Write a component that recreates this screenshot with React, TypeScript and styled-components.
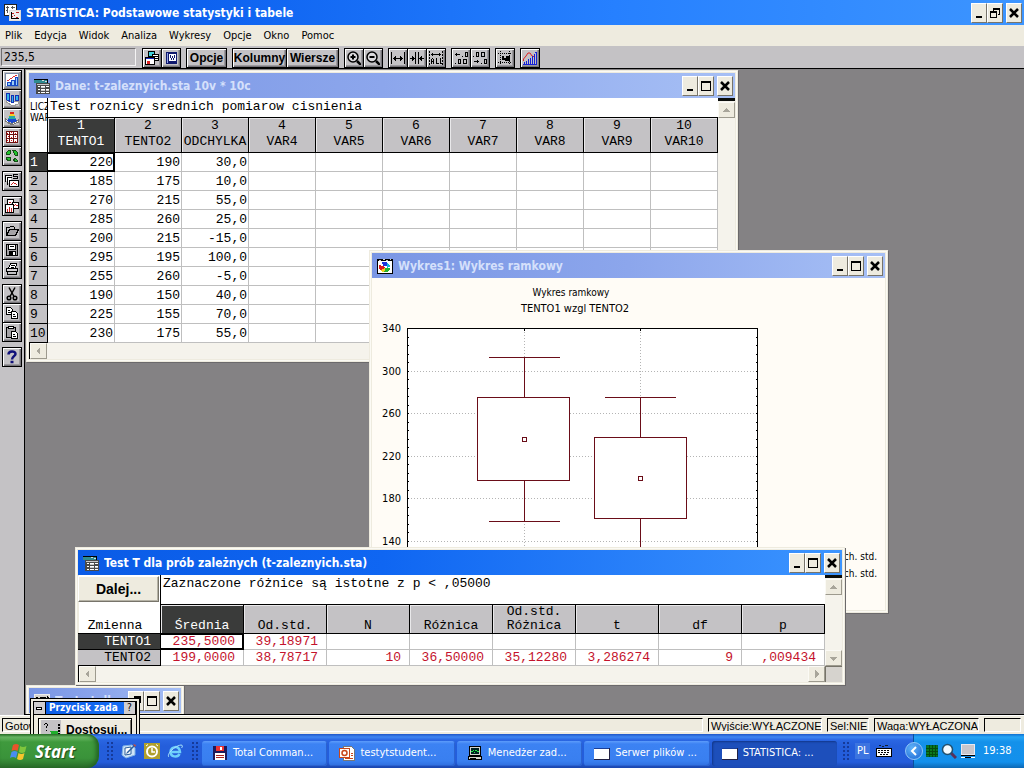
import React from 'react';
import styled, { createGlobalStyle, css } from 'styled-components';

const ui = '"DejaVu Sans Condensed", "DejaVu Sans", sans-serif';
const system = '"Liberation Sans", Arial, sans-serif';
const mono = '"Liberation Mono", "Courier New", monospace';
const gray = '#c4c2c5';
const cream = '#eeebdf';

const Global = createGlobalStyle`
  * { box-sizing: border-box; }
  html, body, #root { height: 100%; margin: 0; }
  body { overflow: hidden; }
  button, input { font: inherit; color: inherit; margin: 0; padding: 0; border-radius: 0; }
  svg { display: block; flex: none; }
`;

/* ---------- shell ---------- */

const Desktop = styled.div`
  position: relative;
  display: flex;
  flex-direction: column;
  height: 100vh;
  background: ${cream};
  font: 11px/14px ${ui};
  color: #000;
`;

const AppTitle = styled.header`
  display: flex;
  align-items: center;
  height: 25px;
  padding: 0 2px 0 4px;
  background: linear-gradient(90deg, #0a5be6 0%, #0d62f0 20%, #2680ff 60%, #3d95ff 100%);
`;

const TitleText = styled.h1<{ $dim?: boolean }>`
  flex: 1;
  min-width: 0;
  margin: 0 0 0 5px;
  overflow: hidden;
  white-space: nowrap;
  font: bold 12px/16px ${ui};
  color: ${(p) => (p.$dim ? '#d5e0fb' : '#fff')};
`;

const Menu = styled.nav`
  display: flex;
  align-items: center;
  gap: 12px;
  height: 21px;
  padding: 0 5px;
`;

const MenuItem = styled.button`
  border: 0;
  background: none;
`;

const Toolbar = styled.div`
  display: flex;
  align-items: center;
  gap: 6px;
  height: 23px;
  padding: 0 2px 0 1px;
  background: ${gray};
  border-bottom: 1px solid #000;
`;

const ValueBox = styled.input`
  width: 135px;
  height: 18px;
  padding: 0 2px;
  border: 1px solid;
  border-color: #6e6c6f #f4f3f4 #f4f3f4 #6e6c6f;
  background: ${gray};
  font: 12px/14px ${ui};
`;

const Group = styled.div<{ $column?: boolean }>`
  display: flex;
  flex-direction: ${(p) => (p.$column ? 'column' : 'row')};
`;

const raised = css`
  border: 1px solid #000;
  background: ${gray};
  box-shadow: inset 1px 1px #fff, inset -1px -1px #77757a, inset -2px -2px #9b999d;
`;

const ToolButton = styled.button<{ $width?: number }>`
  ${raised}
  display: flex;
  align-items: center;
  justify-content: center;
  width: ${(p) => p.$width ?? 20}px;
  height: 20px;
  margin-right: -1px;
  margin-bottom: -1px;
  font: bold 12px/14px ${system};
`;

const Main = styled.main`
  display: flex;
  flex: 1;
  min-height: 0;
`;

const SideBar = styled.aside`
  display: flex;
  flex-direction: column;
  gap: 6px;
  flex: none;
  width: 25px;
  padding: 1px 2px;
  background: ${gray};
  border-right: 1px solid #000;
`;

const Workspace = styled.section`
  position: relative;
  flex: 1;
  overflow: hidden;
  background: #848284;
  border-bottom: 1px solid #000;
`;

/* ---------- windows ---------- */

const Frame = styled.section<{ $x: number; $y: number; $w: number }>`
  position: absolute;
  left: ${(p) => p.$x}px;
  top: ${(p) => p.$y}px;
  width: ${(p) => p.$w}px;
  border: 3px solid ${cream};
  background: #fff;
  box-shadow: inset 0 0 0 1px ${cream}, 1px 1px #6b696b;
  outline: 1px solid #fbfaf4;
  outline-offset: -2px;
`;

const WinTitle = styled.div<{ $active?: boolean }>`
  display: flex;
  align-items: center;
  height: 25px;
  padding: 0 2px 0 5px;
  background: ${(p) =>
    p.$active
      ? 'linear-gradient(90deg, #0a5be6 0%, #0f66f2 40%, #3d95ff 100%)'
      : 'linear-gradient(90deg, #7a96e4 0%, #8ca6ec 50%, #a6bff5 100%)'};
`;

const Controls = styled.div`
  display: flex;
  margin-left: 4px;
  & > :last-child { margin-left: 3px; }
`;

const WinButton = styled.button`
  display: flex;
  align-items: center;
  justify-content: center;
  width: 16px;
  height: 20px;
  border: 1px solid;
  border-color: #fff #77746a #77746a #fff;
  background: ${cream};
`;

const Split = styled.div`
  display: grid;
  grid-template-columns: minmax(0, 1fr) 17px;
`;

const VScroll = styled.div`
  display: flex;
  flex-direction: column;
  justify-content: space-between;
  padding-top: 1px;
  background: #f5f3ec;
  border-top: 3px solid #0b0d0b;
`;

const HScroll = styled.div`
  display: flex;
  justify-content: space-between;
  height: 16px;
  background: #f5f3ec;
  border-left: 1px solid #000;
`;

const ScrollButton = styled.button`
  display: flex;
  align-items: center;
  justify-content: center;
  width: 17px;
  height: 16px;
  border: 1px solid;
  border-color: #fbfaf5 #9d9a8e #9d9a8e #fbfaf5;
  background: ${cream};
`;

const Corner = styled.div`
  border-top: 1px solid #77746a;
  border-left: 1px solid #77746a;
  background: #d6d3ce;
`;

const Grid = styled.table`
  width: 100%;
  table-layout: fixed;
  border-collapse: separate;
  border-spacing: 0;
  font: 13px/15px ${mono};
  th, td { padding: 0; font-weight: normal; white-space: nowrap; overflow: hidden; }
`;

const CaseCol = styled.col`
  width: 19px;
`;

const Info = styled.td<{ $height: number }>`
  height: ${(p) => p.$height}px;
  padding-left: 2px !important;
  vertical-align: top;
  line-height: 18px;
`;

const TopHead = styled.th`
  vertical-align: top;
  text-align: left;
  border-right: 1px solid #000;
  border-bottom: 1px solid #000;
  font: 10px/11px ${ui};
  div { padding: 3px 0 0 1px; }
`;

const ColHead = styled.th<{ $height: number; $line: number; $on?: boolean }>`
  height: ${(p) => p.$height}px;
  padding-bottom: ${(p) => p.$line - 14}px !important;
  line-height: ${(p) => p.$line}px;
  vertical-align: bottom;
  text-align: center;
  white-space: pre !important;
  border: solid #000;
  border-width: 1px 1px 1px 0;
  background: ${(p) => (p.$on ? '#3a3b3a' : gray)};
  color: ${(p) => (p.$on ? '#fff' : '#000')};
  box-shadow: inset 1px 1px #e9e8ea;
`;

const RowHead = styled.th<{ $on?: boolean; $right?: boolean }>`
  text-align: ${(p) => (p.$right ? 'right' : 'left')};
  padding: ${(p) => (p.$right ? '0 9px 0 0' : '0 0 0 1px')} !important;
  border-right: 1px solid #000;
  border-bottom: 1px solid #000;
  background: ${(p) => (p.$on ? '#3a3b3a' : gray)};
  color: ${(p) => (p.$on ? '#fff' : '#000')};
`;

const Cell = styled.td<{ $height: number; $pad: number; $red?: boolean; $on?: boolean }>`
  height: ${(p) => p.$height}px;
  padding-right: ${(p) => p.$pad}px !important;
  text-align: right;
  color: ${(p) => (p.$red ? '#c4122c' : '#000')};
  border-right: 1px solid #bfbfbf;
  border-bottom: 1px solid #bfbfbf;
  ${(p) => p.$on && css`border-color: #000; box-shadow: inset -1px -1px #000, inset 0 1px #000;`}
`;

const NextButton = styled.button`
  width: 81px;
  height: 26px;
  border: 1px solid;
  border-color: #fff #77746a #77746a #fff;
  box-shadow: inset -1px -1px #b5b2a5;
  background: ${cream};
  font: bold 14px/16px ${system};
`;

const VariableHead = styled.th`
  vertical-align: top;
  border-right: 1px solid #000;
  border-bottom: 1px solid #000;
  div { display: flex; flex-direction: column; justify-content: space-between; height: 58px; padding-top: 1px; }
  span { padding-right: 8px; }
`;

const ChartBody = styled.div`
  background: #fffcf6;
  svg { width: 100%; height: auto; font: 11px ${ui}; }
`;

/* ---------- dialog, status bar ---------- */

const Dialog = styled.section`
  position: absolute;
  left: 30px;
  bottom: 34px;
  width: 110px;
  height: 36px;
  padding: 2px;
  overflow: hidden;
  border: solid #000;
  border-width: 1px 1px 0;
  background: ${cream};
`;

const DialogInner = styled.div`
  border: solid #000;
  border-width: 1px 1px 0;
`;

const DialogTitle = styled.div`
  display: flex;
  align-items: center;
  height: 13px;
  background: linear-gradient(90deg, #0a5be6, #1a70f5);
  border-bottom: 1px solid #000;
  h2 { flex: 1; margin: 0 0 0 3px; white-space: nowrap; font: bold 10px/12px ${ui}; color: #fff; }
`;

const TinyButton = styled.button`
  width: 12px;
  height: 12px;
  border: 0;
  background: #d0ced0;
  font: 10px/12px ${ui};
  border-right: 1px solid #000;
`;

const CustomButton = styled.button`
  display: flex;
  align-items: center;
  gap: 5px;
  width: 94px;
  height: 24px;
  margin: 3px 0 0 4px;
  padding: 0 2px;
  border: 1px solid #000;
  background: ${cream};
  box-shadow: inset 1px 1px #fff, inset -1px 0 #77746a;
  font: bold 12px/14px ${system};
`;

const StatusBar = styled.footer`
  display: flex;
  gap: 5px;
  height: 19px;
  padding: 2px 3px 2px 2px;
  border-top: 1px solid #fff;
  font: 11px/14px ${system};
`;

const StatusBox = styled.div<{ $width?: number }>`
  flex: ${(p) => (p.$width ? `0 0 ${p.$width}px` : '1')};
  padding-left: 2px;
  border: 1px solid;
  border-color: #000 #fff #fff #000;
  white-space: nowrap;
  overflow: hidden;
`;

/* ---------- taskbar ---------- */

const TaskBar = styled.footer`
  display: flex;
  align-items: center;
  height: 34px;
  flex: none;
  background: linear-gradient(#1f56c8 0, #4086f2 3px, #2a66e2 6px, #245edb 12px, #245ddb 28px, #1a46ad 34px);
  color: #fff;
`;

const StartButton = styled.button`
  display: flex;
  align-items: center;
  gap: 7px;
  width: 99px;
  height: 34px;
  padding: 2px 0 0 10px !important;
  border: 0;
  border-radius: 0 12px 12px 0 !important;
  background: linear-gradient(#2c7a2c 0, #6cb966 3px, #3f9a3d 8px, #3a933a 24px, #2a6c2a 34px);
  box-shadow: inset -3px 0 4px #236323;
  font: italic bold 17px/24px "Open Sans", sans-serif !important;
  text-shadow: 1px 1px 1px #1c4d1c;
`;

const Grip = styled.div`
  flex: none;
  width: 7px;
  height: 20px;
  background: radial-gradient(circle, #153a9a 1px, transparent 1px) 0 0 / 4px 4px;
`;

const QuickLaunch = styled.div`
  display: flex;
  gap: 7px;
  padding: 0 8px;
  a { color: inherit; }
`;

const StartArea = styled.div`
  display: flex;
  align-items: center;
  gap: 7px;
`;

const Tasks = styled.div`
  display: flex;
  flex: 1;
  min-width: 0;
  gap: 2px;
  padding: 4px 5px 0 4px;
`;

const TaskButton = styled.button<{ $on?: boolean }>`
  display: flex;
  align-items: center;
  flex: 1 1 0;
  min-width: 0;
  gap: 5px;
  height: 25px;
  padding: 0 0 0 10px !important;
  border: 0;
  border-radius: 3px !important;
  white-space: nowrap;
  background: ${(p) => (p.$on ? '#1d4fbb' : 'linear-gradient(#5d9cfb 0, #3c82f3 3px, #397ff0 20px, #2f6ede 25px)')};
  box-shadow: ${(p) => (p.$on ? 'inset 1px 1px 2px #12378a' : 'inset -1px -1px #2b62cf')};
`;

const Language = styled.div`
  display: flex;
  align-items: center;
  gap: 6px;
  width: 64px;
  padding-left: 6px;
  span { padding: 1px 2px; background: #3c74e0; }
`;

const Tray = styled.div`
  display: flex;
  align-items: center;
  gap: 3px;
  width: 111px;
  height: 34px;
  background: linear-gradient(#0f6fd0 0, #25a5f5 3px, #1491ea 8px, #1390ec 28px, #0d68b4 34px);
  border-left: 1px solid #0b4f9c;
  time { margin-left: 4px; }
`;

const TrayArrow = styled.button`
  width: 18px;
  height: 18px;
  margin-left: -9px;
  border: 1px solid #8fc6f7;
  border-radius: 9px !important;
  background: radial-gradient(circle at 6px 5px, #5fb2f8, #1a66d4);
`;

/* ---------- icons ---------- */

const Svg = ({ s = 16, h, children }: { s?: number; h?: number; children: React.ReactNode }) => (
  <svg width={s} height={h ?? s} viewBox={`0 0 ${s} ${h ?? s}`} fill="none" stroke="#000" shapeRendering="crispEdges" aria-hidden="true">
    {children}
  </svg>
);

const ToolSvg = ({ children }: { children: React.ReactNode }) => (
  <svg width="14" height="14" viewBox="1 1 14 14" fill="none" stroke="#000" shapeRendering="crispEdges" aria-hidden="true">
    {children}
  </svg>
);

const MinGlyph = () => <Svg s={12}><path d="M3 9h6v2h-6z" fill="#000" stroke="none" /></Svg>;
const MaxGlyph = () => <Svg s={12}><path d="M1 2.500h10M1 1.500h10M1.500 2v8.500h9v-8.500" /></Svg>;
const RestoreGlyph = () => <Svg s={12}><path d="M4 2.500h7M4 1.500h7M4.500 2v2M10.500 2v5.500H9M1 5.500h7M1 4.500h7M1.500 5v5.500h6V5" /></Svg>;
const CloseGlyph = () => <Svg s={12}><path d="M2 2l8 8M10 2l-8 8" strokeWidth="2.500" shapeRendering="auto" /></Svg>;

const Arrow = ({ d }: { d: string }) => <Svg s={9}><path d={d} fill="#a8a59a" stroke="none" /></Svg>;
const UP = 'M0 6h8L4 2z';
const DOWN = 'M0 3h8L4 7z';
const LEFT = 'M6 0v8L2 4z';
const RIGHT = 'M3 0v8l4-4z';

const SheetIcon = () => (
  <Svg>
    <rect x="0" y="1" width="13" height="4" fill="#2f8b90" stroke="none" />
    <path d="M0 1.500h14M13.500 1v5" />
    <path d="M8 2.500h2M11 3.500h2" stroke="#d8d8d8" />
    <rect x="2" y="5" width="14" height="11" fill="#4a4a4a" stroke="none" />
    <path d="M3 6.500h12" stroke="#c8c8c8" />
    <path d="M4 8.500h2M7 8.500h4M12 8.500h3M4 11.500h2M7 11.500h4M12 11.500h3M4 14.500h2M7 14.500h4M12 14.500h3" stroke="#fff" />
    <path d="M7 9.500h4M12 12.500h3M7 12.500h4" stroke="#c8c8c8" />
  </Svg>
);

const AppIcon = () => (
  <Svg s={17}>
    <rect x="0.500" y="0.500" width="12" height="11" fill="#fff" stroke="#222" />
    <path d="M2 3.500h3M7 3.500h4M2 6.500h2M3.500 2v7M8.500 2v3" stroke="#555" />
    <rect x="5.500" y="6.500" width="11" height="10" fill="#eee" stroke="#ddd" />
    <path d="M7 9.500h3M12 8.500h3M8 12.500h1M10 11.500h1M12 13.500h2" stroke="#c02020" />
    <path d="M7 14.500h8M7.500 8v7" />
  </Svg>
);

const GraphIcon = () => (
  <Svg>
    <rect x="0.500" y="1.500" width="15" height="14" fill="#fff" />
    <path d="M0 1.500h16M0 2.500h16" />
    <path d="M2 2.500h2M6 1.500h2M9 2.500h2M13 1.500h1" stroke="#ccc" />
    <path d="M5 4h5l1 4H6z" fill="#1c33dc" stroke="none" />
    <path d="M10 5l4 3-4 2z" fill="#12b4d8" stroke="none" />
    <path d="M2 7l7 2-5 4-2-2z" fill="#e01b1b" stroke="none" />
    <path d="M7 10l6 0 0 2-3 2h-4z" fill="#27b32c" stroke="none" />
    <path d="M4 12l4-2v3l-3 1z" fill="#f2cf1c" stroke="none" />
  </Svg>
);

const side: { name: string; draw: React.ReactNode }[][] = [
  [
    { name: 'Wykres 2D', draw: <><rect x="1.500" y="1.500" width="13" height="13" fill="#fff" stroke="#7c8ca8" /><path d="M3.500 13.500V10.500h3v3zM7.500 13.500V8.500h3v5zM11.500 13.500V5.500h2v8z" stroke="#1649c8" fill="#9ccdf4" /><path d="M3 8.500h2M5 7.500h1M6 6.500h2M8 5.500h1M9 4.500h2M11 3.500h2" stroke="#d33" /></> },
    { name: 'Wykres 3D', draw: <><path d="M2 3l3 8 9-1v3l-5 2-7-4z" fill="#fff" stroke="#999" /><path d="M2.500 2.500h3v8l-3-2zM7.500 4.500h2v7h-2zM11.500 4.500h3v5h-3z" fill="#35b5e8" stroke="#1231b5" /></> },
    { name: 'Powierzchnia', draw: <><path d="M1.500 9l6 5 7-4v2l-7 3-6-4z" fill="#fff" stroke="#777" /><path d="M3 11l2-3h6l2 3-5 2z" fill="#1b49d0" stroke="none" /><path d="M4 9l2-4h4l2 4z" fill="#27a9a2" stroke="none" /><path d="M5 6h6l-1-2H6z" fill="#f3cf25" stroke="none" /><rect x="6" y="2" width="4" height="2" fill="#d8291e" stroke="none" /></> },
    { name: 'Macierz', draw: <><rect x="2" y="2" width="12" height="12" fill="#fff" stroke="none" /><path d="M2.500 2v12M5.500 2v12M9.500 2v12M13.500 2v12M2 2.500h12M2 5.500h12M2 9.500h12M2 13.500h12" stroke="#6d1010" /><path d="M3 4.500h1M7 3.500h1M11 4.500h1M4 7.500h1M7 8.500h1M11 7.500h1M3 11.500h1M7 11.500h1M11 12.500h1" stroke="#d11" /></> },
    { name: 'Ikony', draw: <g fill="#22c32f" stroke="#154d16"><path d="M2.500 6.500v-2l2-2h2v3l-1 1zM8.500 2.500h3l2 2v3h-2zM2.500 9.500h4v3h-2l-2-1zM9.500 11.500l2-1 2 2v1h-3z" /></g> },
  ],
  [{ name: 'Statystyki', draw: <><path d="M1.500 9V2.500H8M3.500 12V4.500H8M5.500 7.500h9v6h-9z" fill="#fff" /><path d="M7 11.500h1M8 10.500h1M9 9.500h1M10 10.500h2M12 11.500h1" stroke="#c22" /><path d="M14 1.500h-4.500v2h4v2H9" strokeWidth="1" /></> }],
  [{ name: 'Galeria', draw: <><path d="M3.500 8V1.500h6V4M8.500 4.500h6v6h-5z" fill="#fff" /><path d="M5 4.500h2M10 7.500h1M11 6.500h1M12 7.500h2" stroke="#c22" /><rect x="1.500" y="6.500" width="8" height="8" fill="#fff" /><path d="M3.500 14v-3M5.500 14v-5M7.500 14v-4" stroke="#c22" /></> }],
  [
    { name: 'Otwórz', draw: <><path d="M2.500 12V4.500h3l1-1h3l1 1v2" /><path d="M2.500 12.500l3-6h9l-3 6z" fill="#a5a3a6" /></> },
    { name: 'Zapisz', draw: <><rect x="2.500" y="2.500" width="11" height="11" fill="#a5a3a6" /><rect x="4.500" y="2.500" width="7" height="5" fill="#fff" /><path d="M6 4.500h4" /><rect x="5.500" y="9.500" width="6" height="4" fill="#000" /><rect x="9" y="10" width="2" height="3" fill="#fff" stroke="none" /></> },
    { name: 'Drukuj', draw: <><path d="M4.500 7.500l2-5h6l-1 5z" fill="#fff" /><rect x="2.500" y="7.500" width="11" height="3" fill="#d6d4d7" /><path d="M3.500 11v2.500h9V11M7 4.500h4M7 6.500h3" /></> },
  ],
  [
    { name: 'Wytnij', draw: <g shapeRendering="auto" strokeWidth="1.500"><path d="M5 1.500l5 9M11 1.500L6 10.500" /><circle cx="5" cy="12" r="1.800" /><circle cx="11" cy="12" r="1.800" /></g> },
    { name: 'Kopiuj', draw: <><path d="M2.500 2.500h4l2 2v5h-6z" fill="#fff" /><path d="M4 5.500h2M4 7.500h3" /><path d="M7.500 6.500h4l2 2v5h-6z" fill="#fff" /><path d="M9 9.500h2M9 11.500h3" /></> },
    { name: 'Wklej', draw: <><rect x="2.500" y="3.500" width="9" height="10" fill="#a5a3a6" /><rect x="4.500" y="2.500" width="5" height="2" fill="#fff" /><path d="M7.500 7.500h4l2 2v5h-6z" fill="#fff" /><path d="M9 10.500h2M9 12.500h3" /></> },
  ],
  [{ name: 'Pomoc', draw: <g stroke="#10107a" strokeWidth="2.500" shapeRendering="auto"><path d="M4.500 5.500C4.500 1.500 11.500 1.500 11.500 5c0 2-3.500 2.500-3.500 5.500" /><path d="M6.500 13h3" /></g> }],
];

const toolIcons: { name: string; draw: React.ReactNode }[][] = [
  [
    { name: 'Powiększ', draw: <g shapeRendering="auto"><circle cx="7" cy="7" r="5" strokeWidth="1.500" fill="#dcdadd" /><path d="M4.500 7h5M7 4.500v5" strokeWidth="2" /><path d="M11 11l4 4" strokeWidth="2.500" /></g> },
    { name: 'Pomniejsz', draw: <g shapeRendering="auto"><circle cx="7" cy="7" r="5" strokeWidth="1.500" fill="#dcdadd" /><path d="M4.500 7h5" strokeWidth="2" /><path d="M11 11l4 4" strokeWidth="2.500" /></g> },
  ],
  [
    { name: 'Rozszerz', draw: <path d="M1.500 2v12M14.500 2v12M3 8.500h10M4.500 7v3M5.500 6v5M11.500 7v3M10.500 6v5" /> },
    { name: 'Zwęź', draw: <path d="M6.500 2v12M9.500 2v12M1 8.500h5M10 8.500h5M4.500 7v3M3.500 6v5M11.500 7v3M12.500 6v5" /> },
    { name: 'Wszystkie', draw: <><path d="M1.500 1v14M14.500 1v14" strokeDasharray="2 1" /><path d="M3 4.500h10M4.500 3v3M11.500 3v3" /><path d="M3.500 14V9M4 8.500h1M5.500 9v5M3 11.500h3M8.500 8v5.500h2M12.500 8v5.500h1" /></> },
  ],
  [
    { name: 'Więcej miejsc', draw: <><path d="M2 4.500h5M3.500 3v3M9 6.500h1M12 2.500h2v4h-2zM2 13.500h1M5 9.500h2v4H5zM10 9.500h3v4h-3z" /></> },
    { name: 'Mniej miejsc', draw: <><path d="M1 6.500h1M4 2.500h2v4H4zM9 2.500h3v4H9zM2 11.500h5M5.500 10v3M9 13.500h1M12 9.500h2v4h-2z" /></> },
  ],
  [{ name: 'Blok', draw: <><path d="M3.500 1v14M12.500 1v14M1 3.500h14M1 12.500h14" strokeDasharray="1 1" /><path d="M5 6h2v2h2V6h4v5H8v-1H5z" fill="#000" stroke="none" /></> }],
  [{ name: 'Szybki wykres', draw: <><path d="M1.500 11V9L4 6l2-3 2 0 2 3 3 1" stroke="#d22" shapeRendering="auto" /><path d="M2.500 14v-2M4.500 14v-3M6.500 14V9M8.500 14V8M10.500 14V6" stroke="#1420d8" /><path d="M1 14.500h14M12.500 14V4M14.500 14V2M13 2.500h1" stroke="#1420d8" /></> }],
];

const FlagIcon = () => (
  <svg width="18" height="18" viewBox="0 0 18 18" aria-hidden="true">
    <path d="M3 2q3-2 6 0L7.500 8q-3-2-6 0z" fill="#e8542b" />
    <path d="M10 3q3 2 6.500 0L15 9q-3 2-6 0z" fill="#7fc63d" />
    <path d="M1.500 9q3-2 6 0L6 15q-3-2-6 0z" fill="#4a8df0" />
    <path d="M8.500 10q3 2 6 0L13 16q-3 2-6 0z" fill="#f7c52c" />
  </svg>
);

const DesktopIcon = () => (
  <svg width="16" height="16" viewBox="0 0 16 16" fill="none" aria-hidden="true">
    <path d="M2 3l9-1 3 3v7l-9 3-4-3z" fill="#cfe3f7" stroke="#7fb2e5" />
    <path d="M4 5l6-1v7l-6 1z" fill="#fff" stroke="#2b5f9c" />
    <path d="M6 9l7-7 1 1-7 7-2 1z" fill="#2b5f9c" />
    <path d="M12 1l3 1-1 2z" fill="#d84c2c" />
  </svg>
);
const ClockIcon = () => (
  <svg width="16" height="16" viewBox="0 0 16 16" fill="none" aria-hidden="true">
    <rect width="16" height="16" fill="#b0a02c" />
    <circle cx="8" cy="8.500" r="5" stroke="#fff" strokeWidth="2" /><path d="M8 5v4h3" stroke="#fff" strokeWidth="1.500" /><path d="M2 3l2-1.500M14 3l-2-1.500" stroke="#fff" />
  </svg>
);
const BrowserIcon = () => (
  <svg width="16" height="16" viewBox="0 0 16 16" fill="none" aria-hidden="true">
    <path d="M3.500 9h9.500c0-7-9.500-6-9.500 0 0 5 7 6 9 2" stroke="#6fd0fb" strokeWidth="2.500" />
    <path d="M2 14c-3-2 5-11 12-12 2 0 1.500 2 .5 3" stroke="#a8e3fb" />
  </svg>
);

const taskIcons = {
  floppy: <Svg><path d="M1 1h14v14H1z" fill="#1c1a5c" stroke="none" /><path d="M4 1h8v5H4z" fill="#e33" stroke="none" /><path d="M3 8h10v7H3z" fill="#fff" stroke="none" /><path d="M4 10.500h8M4 12.500h8" stroke="#a22" /><path d="M8 2h2v3H8z" fill="#fff" stroke="none" /></Svg>,
  slides: <Svg><path d="M4.500 1.500h8l3 3v11h-11z" fill="#fff" stroke="#777" /><rect x="0.500" y="3.500" width="10" height="9" fill="#fff" stroke="#c8461c" /><circle cx="5.500" cy="8" r="2.500" stroke="#c8461c" strokeWidth="1.500" shapeRendering="auto" /><path d="M12 8.500h2M12 10.500h2M6 13.500h8" stroke="#c8461c" /></Svg>,
  monitor: <Svg><rect x="2.500" y="1.500" width="11" height="9" fill="#d6d3ce" /><rect x="4" y="3" width="8" height="6" fill="#022" stroke="none" /><path d="M4 6.500h2M6 5.500h1M7 7.500h1M8 5.500h2M10 6.500h2" stroke="#2e4" /><path d="M1.500 11.500h13v3h-13z" fill="#d6d3ce" /><path d="M3 13.500h6" /></Svg>,
  window: <Svg><rect x="0" y="3" width="16" height="11" fill="#fff" stroke="none" /><path d="M0 3.500h16" stroke="#1b3f98" /><path d="M0 14.500h16M15.500 3v12" stroke="#224" /></Svg>,
};

const tasks: [string, keyof typeof taskIcons][] = [
  ['Total Comman...', 'floppy'],
  ['testytstudent...', 'slides'],
  ['Menedżer zad...', 'monitor'],
  ['Serwer plików ...', 'window'],
  ['STATISTICA: ...', 'window'],
];

/* ---------- data ---------- */

const columns = ['TENTO1', 'TENTO2', 'ODCHYLKA', 'VAR4', 'VAR5', 'VAR6', 'VAR7', 'VAR8', 'VAR9', 'VAR10'];
const cases = [
  ['220', '190', '30,0'], ['185', '175', '10,0'], ['270', '215', '55,0'], ['285', '260', '25,0'], ['200', '215', '-15,0'],
  ['295', '195', '100,0'], ['255', '260', '-5,0'], ['190', '150', '40,0'], ['225', '155', '70,0'], ['230', '175', '55,0'],
];
const resultHeads = ['Średnia', 'Od.std.', 'N', 'Różnica', 'Od.std.\nRóżnica', 't', 'df', 'p'];
const results: [string, string[]][] = [
  ['TENTO1', ['235,5000', '39,18971', '', '', '', '', '', '']],
  ['TENTO2', ['199,0000', '38,78717', '10', '36,50000', '35,12280', '3,286274', '9', ',009434']],
];

const WindowControls = ({ restore }: { restore?: boolean }) => (
  <Controls>
    <WinButton aria-label="Minimalizuj">{restore ? <RestoreGlyph /> : <MinGlyph />}</WinButton>
    <WinButton aria-label="Maksymalizuj"><MaxGlyph /></WinButton>
    <WinButton aria-label="Zamknij"><CloseGlyph /></WinButton>
  </Controls>
);

const DataWindow = () => (
  <Frame $x={1} $y={1} $w={712}>
    <WinTitle><SheetIcon /><TitleText as="h2" $dim>Dane: t-zaleznyich.sta 10v * 10c</TitleText><WindowControls /></WinTitle>
    <Split>
      <Grid>
        <colgroup><CaseCol />{columns.map((c) => <col key={c} />)}</colgroup>
        <thead>
          <tr><TopHead rowSpan={2}><div>LICZ<br />WAR</div></TopHead><Info $height={19} colSpan={10}>Test roznicy srednich pomiarow cisnienia</Info></tr>
          <tr>{columns.map((c, i) => <ColHead key={c} $height={36} $line={16} $on={i === 0}>{`${i + 1}\n${c}`}</ColHead>)}</tr>
        </thead>
        <tbody>
          {cases.map((row, r) => (
            <tr key={r}>
              <RowHead $on={r === 0}>{r + 1}</RowHead>
              {columns.map((c, i) => <Cell key={c} $height={19} $pad={1} $on={r === 0 && i === 0}>{row[i]}</Cell>)}
            </tr>
          ))}
        </tbody>
      </Grid>
      <VScroll><ScrollButton aria-label="W górę"><Arrow d={UP} /></ScrollButton></VScroll>
      <HScroll><ScrollButton aria-label="W lewo"><Arrow d={LEFT} /></ScrollButton></HScroll>
      <Corner />
    </Split>
  </Frame>
);

const yOf = (v: number) => Math.round((340 - v) * 1.0625) + 50.5;

type BoxProps = { x: number; left: number; top: number; q3: number; mean: number; q1: number; bottom: number };
const Box = ({ x, left, top, q3, mean, q1, bottom }: BoxProps) => (
  <g stroke="#6a0d18" fill="none">
    <path d={`M${x - 35.5} ${top}h71M${x} ${top}V${q3}M${x} ${q1}V${bottom}M${x - 35.5} ${bottom}h71`} />
    <rect x={left} y={q3} width="92" height={q1 - q3} fill="#fff" />
    <rect x={x - 2} y={mean - 2} width="4" height="4" />
  </g>
);

const ChartWindow = () => {
  const majors = [340, 300, 260, 220, 180, 140, 100];
  const minors = Array.from({ length: 30 }, (_, i) => 340 - i * 8);
  return (
    <Frame $x={344} $y={181} $w={519}>
      <WinTitle><GraphIcon /><TitleText as="h2" $dim>Wykres1: Wykres ramkowy</TitleText><WindowControls /></WinTitle>
      <ChartBody>
        <svg viewBox="0 0 513 332" role="img" aria-label="Wykres ramkowy" shapeRendering="crispEdges">
          <text x="199" y="18" textAnchor="middle" fontSize="10">Wykres ramkowy</text>
          <text x="203" y="34" textAnchor="middle">TENTO1 wzgl TENTO2</text>
          <rect x="35.500" y="50.500" width="350" height="255" fill="#fff" stroke="#000" />
          <g stroke="#b4b4b4" strokeDasharray="1 2">
            {majors.slice(1, 6).map((v) => <path key={v} d={`M36 ${yOf(v)}H385`} />)}
            <path d="M152.500 51V305M268.500 51V305" />
          </g>
          <g stroke="#000">
            {minors.map((v) => <path key={v} d={`M35 ${yOf(v)}h2M386 ${yOf(v)}h-2`} />)}
            <path d="M152.500 50v3M268.500 50v3" />
          </g>
          {majors.slice(0, 6).map((v) => <text key={v} x="29" y={yOf(v) + 3.5} textAnchor="end">{v}</text>)}
          <Box x={152.5} left={105.5} top={79.5} q3={119.5} mean={161.5} q1={202.5} bottom={243.5} />
          <Box x={268.5} left={222.5} top={119.5} q3={159.5} mean={200.5} q1={240.5} bottom={281.5} />
          <text x="505" y="282" textAnchor="end" fontSize="10">ch. std.</text>
          <text x="505" y="299" textAnchor="end" fontSize="10">ch. std.</text>
        </svg>
      </ChartBody>
    </Frame>
  );
};

const ResultsWindow = () => (
  <Frame $x={50} $y={478} $w={770}>
    <WinTitle $active><SheetIcon /><TitleText as="h2">Test T dla prób zależnych (t-zaleznyich.sta)</TitleText><WindowControls /></WinTitle>
    <Split>
      <Grid>
        <thead>
          <tr>
            <VariableHead rowSpan={2}><div><NextButton>Dalej...</NextButton><span>Zmienna</span></div></VariableHead>
            <Info $height={29} colSpan={8}>Zaznaczone różnice są istotne z p &lt; ,05000</Info>
          </tr>
          <tr>
            {resultHeads.map((h, i) => <ColHead key={i} $height={30} $line={14} $on={i === 0}>{h}</ColHead>)}
          </tr>
        </thead>
        <tbody>
          {results.map(([name, row], r) => (
            <tr key={name}>
              <RowHead $right $on={r === 0}>{name}</RowHead>
              {row.map((v, i) => <Cell key={i} $height={16} $pad={8} $red $on={r === 0 && i === 0}>{v}</Cell>)}
            </tr>
          ))}
        </tbody>
      </Grid>
      <VScroll>
        <ScrollButton aria-label="W górę"><Arrow d={UP} /></ScrollButton>
        <ScrollButton aria-label="W dół"><Arrow d={DOWN} /></ScrollButton>
      </VScroll>
      <HScroll>
        <ScrollButton aria-label="W lewo"><Arrow d={LEFT} /></ScrollButton>
        <ScrollButton aria-label="W prawo"><Arrow d={RIGHT} /></ScrollButton>
      </HScroll>
      <Corner />
    </Split>
  </Frame>
);

export default function App() {
  return (
    <Desktop>
      <Global />
      <AppTitle>
        <AppIcon />
        <TitleText>STATISTICA: Podstawowe statystyki i tabele</TitleText>
        <Controls>
          <WinButton aria-label="Minimalizuj"><MinGlyph /></WinButton>
          <WinButton aria-label="Przywróć"><RestoreGlyph /></WinButton>
          <WinButton aria-label="Zamknij"><CloseGlyph /></WinButton>
        </Controls>
      </AppTitle>
      <Menu>
        {['Plik', 'Edycja', 'Widok', 'Analiza', 'Wykresy', 'Opcje', 'Okno', 'Pomoc'].map((m) => <MenuItem key={m}>{m}</MenuItem>)}
      </Menu>
      <Toolbar>
        <ValueBox aria-label="Wartość" defaultValue="235,5" />
        <Group>
          <ToolButton aria-label="Okna"><ToolSvg><rect x="4.500" y="1.500" width="6" height="5" fill="#3fd0dc" /><rect x="8.500" y="4.500" width="6" height="6" fill="#fff" /><path d="M9 6.500h6M10 8.500h4" /><rect x="1.500" y="7.500" width="9" height="7" fill="#fff" /><path d="M2 8.500h8" stroke="#1d2ac0" /><path d="M3 11h3v3H3z" fill="#d22" stroke="none" /></ToolSvg></ToolButton>
          <ToolButton aria-label="Skoroszyt"><ToolSvg><rect x="3" y="2" width="11" height="12" fill="#10196e" stroke="none" /><path d="M4.500 3v10" stroke="#8fa2e8" /><rect x="6" y="4" width="7" height="7" fill="#fff" stroke="none" /><path d="M7.500 5v3M8.500 8v2M9.500 6v2M10.500 8v2M11.500 5v3" stroke="#10196e" /></ToolSvg></ToolButton>
        </Group>
        <Group><ToolButton $width={41}>Opcje</ToolButton></Group>
        <Group><ToolButton $width={55}>Kolumny</ToolButton><ToolButton $width={53}>Wiersze</ToolButton></Group>
        {toolIcons.map((g, i) => (
          <Group key={i}>{g.map((b) => <ToolButton key={b.name} aria-label={b.name}><ToolSvg>{b.draw}</ToolSvg></ToolButton>)}</Group>
        ))}
      </Toolbar>
      <Main>
        <SideBar>
          {side.map((g, i) => (
            <Group $column key={i}>{g.map((b) => <ToolButton key={b.name} aria-label={b.name}><ToolSvg>{b.draw}</ToolSvg></ToolButton>)}</Group>
          ))}
        </SideBar>
        <Workspace>
          <DataWindow />
          <ChartWindow />
          <Frame $x={1} $y={616} $w={158}>
            <WinTitle>
              <Svg><rect x="0.500" y="1.500" width="15" height="13" fill="#d6d3ce" stroke="#eee" /><path d="M2 4.500h2M2.500 4v3M3 7.500h1M6 4.500h2v3H6zM9.500 4v4M11.500 4v4M10 4.500h1M13 4.500h2M13.500 3v5" /></Svg>
              <TitleText as="h2" $dim>Testy t dl...</TitleText>
              <WindowControls restore />
            </WinTitle>
          </Frame>
          <ResultsWindow />
        </Workspace>
      </Main>
      <StatusBar>
        <StatusBox>Gotowe</StatusBox>
        <StatusBox $width={114}>Wyjście:WYŁĄCZONE</StatusBox>
        <StatusBox $width={42}>Sel:NIE</StatusBox>
        <StatusBox $width={105}>Waga:WYŁĄCZONA</StatusBox>
        <StatusBox $width={37} />
      </StatusBar>
      <Dialog>
        <DialogInner>
          <DialogTitle>
            <TinyButton aria-label="Menu"><Svg s={11}><path d="M2.500 4.500h5v2h-5z" fill="#fff" /></Svg></TinyButton>
            <h2>Przycisk zada</h2>
            <TinyButton>?</TinyButton>
          </DialogTitle>
          <CustomButton>
            <Svg s={20}><rect width="20" height="20" fill="#c4c2c5" stroke="none" /><path d="M4 3.500h2M3.500 4v1M6.500 4v2M5.500 6v2M5 10.500h1" /><path d="M9 11h8v6h-5z" fill="#1fae2c" stroke="none" /><path d="M17.500 4v10" strokeDasharray="2 1" strokeWidth="2" /></Svg>
            Dostosuj...
          </CustomButton>
        </DialogInner>
      </Dialog>
      <TaskBar>
        <StartArea>
          <StartButton><FlagIcon />Start</StartButton>
          <Grip />
        </StartArea>
        <QuickLaunch>
          <a href="#desktop" aria-label="Pulpit"><DesktopIcon /></a>
          <a href="#clock" aria-label="Zegar"><ClockIcon /></a>
          <a href="#browser" aria-label="Przeglądarka"><BrowserIcon /></a>
        </QuickLaunch>
        <Grip />
        <Tasks>
          {tasks.map(([label, icon], i) => <TaskButton key={label} $on={i === 4}>{taskIcons[icon]}{label}</TaskButton>)}
        </Tasks>
        <Grip />
        <Language>
          <span>PL</span>
          <Svg s={16} h={14}><path d="M3 1.500h2M6 2.500h2M9 1.500h3" stroke="#123" /><rect x="0.500" y="4.500" width="15" height="8" fill="#fff" /><path d="M2 6.500h12M2 8.500h12M4 10.500h8" strokeDasharray="2 1" /></Svg>
        </Language>
        <Tray>
          <TrayArrow aria-label="Pokaż ukryte ikony"><svg width="16" height="16" viewBox="0 0 16 16" fill="none" stroke="#fff" strokeWidth="2" aria-hidden="true"><path d="M10 4L6 8l4 4" /></svg></TrayArrow>
          <Svg s={12}><rect x="0.500" y="0.500" width="11" height="11" fill="#0b7a1c" stroke="#063" /><path d="M0 3.500h12M0 6.500h12M0 9.500h12M3.500 0v12M6.500 0v12M9.500 0v12" stroke="#054a0c" /></Svg>
          <svg width="16" height="16" viewBox="0 0 16 16" aria-hidden="true"><path d="M10 10l5 5" stroke="#58305a" strokeWidth="3" /><circle cx="6.500" cy="6.500" r="5" fill="#f2fbff" stroke="#20506e" strokeWidth="1.500" /></svg>
          <Svg><rect x="1.500" y="1.500" width="13" height="10" fill="#c8c6cc" stroke="#e8e8f0" /><path d="M1 12.500h14M4 14.500h8" /><path d="M1 14.500h4M11 14.500h4" stroke="#fff" /></Svg>
          <time>19:38</time>
        </Tray>
      </TaskBar>
    </Desktop>
  );
}
